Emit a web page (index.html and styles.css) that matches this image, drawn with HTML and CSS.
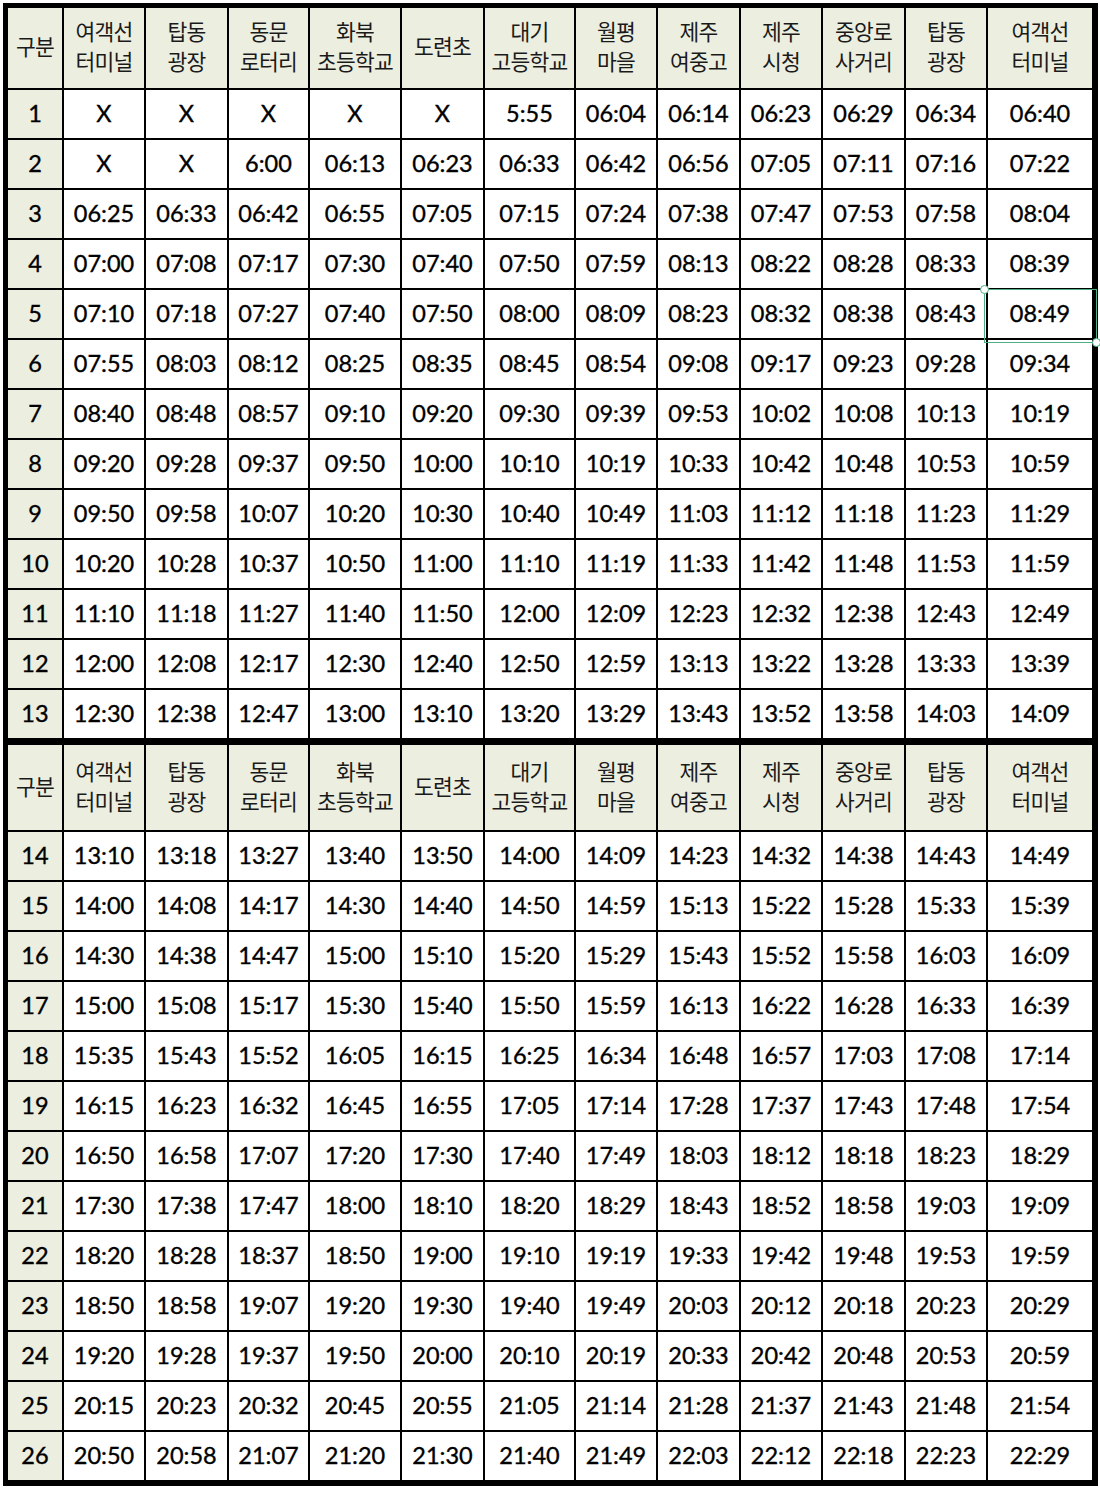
FILE: index.html
```html
<!DOCTYPE html>
<html lang="ko">
<head>
<meta charset="utf-8">
<title>시간표</title>
<link rel="stylesheet" href="styles.css">
</head>
<body>
<div class="sheet">
  <div class="row head">
    <div class="c">구분</div><div class="c">여객선<br>터미널</div><div class="c">탑동<br>광장</div><div class="c">동문<br>로터리</div><div class="c">화북<br>초등학교</div><div class="c">도련초</div><div class="c">대기<br>고등학교</div><div class="c">월평<br>마을</div><div class="c">제주<br>여중고</div><div class="c">제주<br>시청</div><div class="c">중앙로<br>사거리</div><div class="c">탑동<br>광장</div><div class="c">여객선<br>터미널</div>
  </div>
  <div class="row"><div class="c n">1</div><div class="c">X</div><div class="c">X</div><div class="c">X</div><div class="c">X</div><div class="c">X</div><div class="c">5:55</div><div class="c">06:04</div><div class="c">06:14</div><div class="c">06:23</div><div class="c">06:29</div><div class="c">06:34</div><div class="c">06:40</div></div>
  <div class="row"><div class="c n">2</div><div class="c">X</div><div class="c">X</div><div class="c">6:00</div><div class="c">06:13</div><div class="c">06:23</div><div class="c">06:33</div><div class="c">06:42</div><div class="c">06:56</div><div class="c">07:05</div><div class="c">07:11</div><div class="c">07:16</div><div class="c">07:22</div></div>
  <div class="row"><div class="c n">3</div><div class="c">06:25</div><div class="c">06:33</div><div class="c">06:42</div><div class="c">06:55</div><div class="c">07:05</div><div class="c">07:15</div><div class="c">07:24</div><div class="c">07:38</div><div class="c">07:47</div><div class="c">07:53</div><div class="c">07:58</div><div class="c">08:04</div></div>
  <div class="row"><div class="c n">4</div><div class="c">07:00</div><div class="c">07:08</div><div class="c">07:17</div><div class="c">07:30</div><div class="c">07:40</div><div class="c">07:50</div><div class="c">07:59</div><div class="c">08:13</div><div class="c">08:22</div><div class="c">08:28</div><div class="c">08:33</div><div class="c">08:39</div></div>
  <div class="row"><div class="c n">5</div><div class="c">07:10</div><div class="c">07:18</div><div class="c">07:27</div><div class="c">07:40</div><div class="c">07:50</div><div class="c">08:00</div><div class="c">08:09</div><div class="c">08:23</div><div class="c">08:32</div><div class="c">08:38</div><div class="c">08:43</div><div class="c selected">08:49<span class="sel-box"><span class="handle tl"></span><span class="handle br"></span></span></div></div>
  <div class="row"><div class="c n">6</div><div class="c">07:55</div><div class="c">08:03</div><div class="c">08:12</div><div class="c">08:25</div><div class="c">08:35</div><div class="c">08:45</div><div class="c">08:54</div><div class="c">09:08</div><div class="c">09:17</div><div class="c">09:23</div><div class="c">09:28</div><div class="c">09:34</div></div>
  <div class="row"><div class="c n">7</div><div class="c">08:40</div><div class="c">08:48</div><div class="c">08:57</div><div class="c">09:10</div><div class="c">09:20</div><div class="c">09:30</div><div class="c">09:39</div><div class="c">09:53</div><div class="c">10:02</div><div class="c">10:08</div><div class="c">10:13</div><div class="c">10:19</div></div>
  <div class="row"><div class="c n">8</div><div class="c">09:20</div><div class="c">09:28</div><div class="c">09:37</div><div class="c">09:50</div><div class="c">10:00</div><div class="c">10:10</div><div class="c">10:19</div><div class="c">10:33</div><div class="c">10:42</div><div class="c">10:48</div><div class="c">10:53</div><div class="c">10:59</div></div>
  <div class="row"><div class="c n">9</div><div class="c">09:50</div><div class="c">09:58</div><div class="c">10:07</div><div class="c">10:20</div><div class="c">10:30</div><div class="c">10:40</div><div class="c">10:49</div><div class="c">11:03</div><div class="c">11:12</div><div class="c">11:18</div><div class="c">11:23</div><div class="c">11:29</div></div>
  <div class="row"><div class="c n">10</div><div class="c">10:20</div><div class="c">10:28</div><div class="c">10:37</div><div class="c">10:50</div><div class="c">11:00</div><div class="c">11:10</div><div class="c">11:19</div><div class="c">11:33</div><div class="c">11:42</div><div class="c">11:48</div><div class="c">11:53</div><div class="c">11:59</div></div>
  <div class="row"><div class="c n">11</div><div class="c">11:10</div><div class="c">11:18</div><div class="c">11:27</div><div class="c">11:40</div><div class="c">11:50</div><div class="c">12:00</div><div class="c">12:09</div><div class="c">12:23</div><div class="c">12:32</div><div class="c">12:38</div><div class="c">12:43</div><div class="c">12:49</div></div>
  <div class="row"><div class="c n">12</div><div class="c">12:00</div><div class="c">12:08</div><div class="c">12:17</div><div class="c">12:30</div><div class="c">12:40</div><div class="c">12:50</div><div class="c">12:59</div><div class="c">13:13</div><div class="c">13:22</div><div class="c">13:28</div><div class="c">13:33</div><div class="c">13:39</div></div>
  <div class="row"><div class="c n">13</div><div class="c">12:30</div><div class="c">12:38</div><div class="c">12:47</div><div class="c">13:00</div><div class="c">13:10</div><div class="c">13:20</div><div class="c">13:29</div><div class="c">13:43</div><div class="c">13:52</div><div class="c">13:58</div><div class="c">14:03</div><div class="c">14:09</div></div>
  <div class="row head head2">
    <div class="c">구분</div><div class="c">여객선<br>터미널</div><div class="c">탑동<br>광장</div><div class="c">동문<br>로터리</div><div class="c">화북<br>초등학교</div><div class="c">도련초</div><div class="c">대기<br>고등학교</div><div class="c">월평<br>마을</div><div class="c">제주<br>여중고</div><div class="c">제주<br>시청</div><div class="c">중앙로<br>사거리</div><div class="c">탑동<br>광장</div><div class="c">여객선<br>터미널</div>
  </div>
  <div class="row"><div class="c n">14</div><div class="c">13:10</div><div class="c">13:18</div><div class="c">13:27</div><div class="c">13:40</div><div class="c">13:50</div><div class="c">14:00</div><div class="c">14:09</div><div class="c">14:23</div><div class="c">14:32</div><div class="c">14:38</div><div class="c">14:43</div><div class="c">14:49</div></div>
  <div class="row"><div class="c n">15</div><div class="c">14:00</div><div class="c">14:08</div><div class="c">14:17</div><div class="c">14:30</div><div class="c">14:40</div><div class="c">14:50</div><div class="c">14:59</div><div class="c">15:13</div><div class="c">15:22</div><div class="c">15:28</div><div class="c">15:33</div><div class="c">15:39</div></div>
  <div class="row"><div class="c n">16</div><div class="c">14:30</div><div class="c">14:38</div><div class="c">14:47</div><div class="c">15:00</div><div class="c">15:10</div><div class="c">15:20</div><div class="c">15:29</div><div class="c">15:43</div><div class="c">15:52</div><div class="c">15:58</div><div class="c">16:03</div><div class="c">16:09</div></div>
  <div class="row"><div class="c n">17</div><div class="c">15:00</div><div class="c">15:08</div><div class="c">15:17</div><div class="c">15:30</div><div class="c">15:40</div><div class="c">15:50</div><div class="c">15:59</div><div class="c">16:13</div><div class="c">16:22</div><div class="c">16:28</div><div class="c">16:33</div><div class="c">16:39</div></div>
  <div class="row"><div class="c n">18</div><div class="c">15:35</div><div class="c">15:43</div><div class="c">15:52</div><div class="c">16:05</div><div class="c">16:15</div><div class="c">16:25</div><div class="c">16:34</div><div class="c">16:48</div><div class="c">16:57</div><div class="c">17:03</div><div class="c">17:08</div><div class="c">17:14</div></div>
  <div class="row"><div class="c n">19</div><div class="c">16:15</div><div class="c">16:23</div><div class="c">16:32</div><div class="c">16:45</div><div class="c">16:55</div><div class="c">17:05</div><div class="c">17:14</div><div class="c">17:28</div><div class="c">17:37</div><div class="c">17:43</div><div class="c">17:48</div><div class="c">17:54</div></div>
  <div class="row"><div class="c n">20</div><div class="c">16:50</div><div class="c">16:58</div><div class="c">17:07</div><div class="c">17:20</div><div class="c">17:30</div><div class="c">17:40</div><div class="c">17:49</div><div class="c">18:03</div><div class="c">18:12</div><div class="c">18:18</div><div class="c">18:23</div><div class="c">18:29</div></div>
  <div class="row"><div class="c n">21</div><div class="c">17:30</div><div class="c">17:38</div><div class="c">17:47</div><div class="c">18:00</div><div class="c">18:10</div><div class="c">18:20</div><div class="c">18:29</div><div class="c">18:43</div><div class="c">18:52</div><div class="c">18:58</div><div class="c">19:03</div><div class="c">19:09</div></div>
  <div class="row"><div class="c n">22</div><div class="c">18:20</div><div class="c">18:28</div><div class="c">18:37</div><div class="c">18:50</div><div class="c">19:00</div><div class="c">19:10</div><div class="c">19:19</div><div class="c">19:33</div><div class="c">19:42</div><div class="c">19:48</div><div class="c">19:53</div><div class="c">19:59</div></div>
  <div class="row"><div class="c n">23</div><div class="c">18:50</div><div class="c">18:58</div><div class="c">19:07</div><div class="c">19:20</div><div class="c">19:30</div><div class="c">19:40</div><div class="c">19:49</div><div class="c">20:03</div><div class="c">20:12</div><div class="c">20:18</div><div class="c">20:23</div><div class="c">20:29</div></div>
  <div class="row"><div class="c n">24</div><div class="c">19:20</div><div class="c">19:28</div><div class="c">19:37</div><div class="c">19:50</div><div class="c">20:00</div><div class="c">20:10</div><div class="c">20:19</div><div class="c">20:33</div><div class="c">20:42</div><div class="c">20:48</div><div class="c">20:53</div><div class="c">20:59</div></div>
  <div class="row"><div class="c n">25</div><div class="c">20:15</div><div class="c">20:23</div><div class="c">20:32</div><div class="c">20:45</div><div class="c">20:55</div><div class="c">21:05</div><div class="c">21:14</div><div class="c">21:28</div><div class="c">21:37</div><div class="c">21:43</div><div class="c">21:48</div><div class="c">21:54</div></div>
  <div class="row"><div class="c n">26</div><div class="c">20:50</div><div class="c">20:58</div><div class="c">21:07</div><div class="c">21:20</div><div class="c">21:30</div><div class="c">21:40</div><div class="c">21:49</div><div class="c">22:03</div><div class="c">22:12</div><div class="c">22:18</div><div class="c">22:23</div><div class="c">22:29</div></div>
</div>
</body>
</html>
```

FILE: styles.css
```css
html, body {
  margin: 0;
  padding: 0;
  background: #ffffff;
}

body {
  padding: 3px 0 0 3px;
  font-family: "Lato", "Noto Sans CJK KR", sans-serif;
  color: #000000;
}

.sheet {
  width: 1084px;
  padding: 5px 6px 6px 5px;
  background: #000000;
  display: flex;
  flex-direction: column;
  gap: 2px;
}

.row {
  display: grid;
  grid-template-columns: 54px 80px 81px 79px 90px 81px 89px 80px 81px 80px 81px 80px 104px;
  gap: 2px;
  height: 48px;
}

.row.head {
  height: 80px;
}

.row.head2 {
  height: 85px;
  margin-top: 5px;
}

.c {
  background: #ffffff;
  display: flex;
  align-items: center;
  justify-content: center;
  text-align: center;
  font-size: 23.5px;
  line-height: 1;
  white-space: nowrap;
  -webkit-text-stroke: 0.35px #000000;
}

.c.n {
  background: #eceee0;
}

.head .c {
  background: #eceee0;
  font-family: "Noto Sans CJK KR", sans-serif;
  font-size: 21.5px;
  line-height: 30px;
  letter-spacing: -0.8px;
  padding-bottom: 4px;
  color: #1a1a1a;
  -webkit-text-stroke: 0;
}

.selected {
  position: relative;
}

.sel-box {
  position: absolute;
  left: -4px;
  top: -1px;
  right: -5px;
  bottom: -5px;
  border: 1.5px solid #4fb083;
  pointer-events: none;
}

.handle {
  position: absolute;
  width: 7px;
  height: 7px;
  border-radius: 50%;
  background: #ffffff;
  border: 1.5px solid #4fb083;
}

.handle.tl {
  left: -5px;
  top: -5px;
}

.handle.br {
  right: -5px;
  bottom: -5px;
}
```
